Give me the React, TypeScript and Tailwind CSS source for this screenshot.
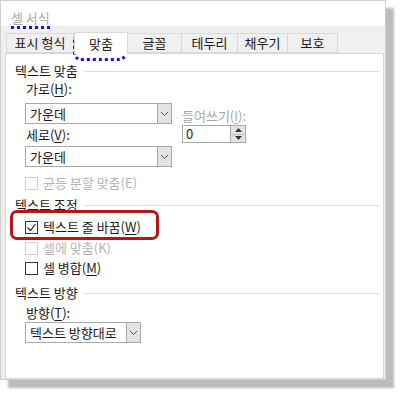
import React from 'react';

const font = { fontFamily: '"Noto Sans CJK KR", "Noto Sans", sans-serif' };

function Key({ k }: { k: string }) {
  return (
    <span>
      (<span className="underline underline-offset-2">{k}</span>)
    </span>
  );
}

function Chevron() {
  return (
    <svg width="9" height="6" viewBox="0 0 9 6">
      <path d="M1 1l3.5 3.5L8 1" fill="none" stroke="#555" strokeWidth="1" />
    </svg>
  );
}

function Select({ value, width }: { value: string; width: string }) {
  return (
    <div className={`flex h-[21px] ${width} border border-[#a9a9a9] bg-white`}>
      <div className="flex flex-1 items-center pl-[4px] text-[13px] text-[#1a1a1a]">{value}</div>
      <div className="flex w-[14px] items-center justify-center border-l border-[#a9a9a9] bg-[#e3e3e3]">
        <Chevron />
      </div>
    </div>
  );
}

function Check({ label, checked, disabled }: { label: React.ReactNode; checked?: boolean; disabled?: boolean }) {
  return (
    <div className={`flex h-[18px] items-center gap-[5px] text-[13px] ${disabled ? 'text-[#b5b5b5]' : 'text-[#1a1a1a]'}`}>
      <div
        className={`flex h-[13px] w-[13px] items-center justify-center border bg-white ${
          disabled ? 'border-[#d0d0d0]' : 'border-[#333]'
        }`}
      >
        {checked && (
          <svg width="11" height="11" viewBox="0 0 11 11">
            <path d="M1.5 5.5l3 3L9.5 2" fill="none" stroke="#222" strokeWidth="1.2" />
          </svg>
        )}
      </div>
      <span>{label}</span>
    </div>
  );
}

function Heading({ text }: { text: string }) {
  return (
    <div className="flex h-[18px] items-center gap-[6px] text-[13px] text-[#1a1a1a]">
      <span>{text}</span>
      <div className="h-px flex-1 bg-[#dcdcdc]" />
    </div>
  );
}

const tabs = [
  { name: '표시 형식', w: 'w-[68px]' },
  { name: '맞춤', w: 'w-[54px]', active: true },
  { name: '글꼴', w: 'w-[54px]' },
  { name: '테두리', w: 'w-[56px]' },
  { name: '채우기', w: 'w-[50px]' },
  { name: '보호', w: 'w-[50px]' },
];

export default function App() {
  return (
    <div className="h-[394px] w-[400px] overflow-hidden bg-white" style={font}>
      <div className="relative flex h-[380px] w-[386px] flex-col border border-[#cfcfcf] bg-[#f0f0f0] shadow-[8px_8px_2px_#bcbcbc]">
        {/* title */}
        <div className="h-[25px] bg-white pl-[10px] pt-[3px]">
          <span className="inline-block border-b-[3px] border-dotted border-[#1414e6] pb-[1px] text-[13px] leading-[15px] text-[#a8a8a8]">
            셀 서식
          </span>
        </div>

        {/* tabs */}
        <div className="flex items-end pl-[5px] pt-[6px]">
          {tabs.map((t) => (
            <div
              key={t.name}
              className={`flex items-center justify-center text-[13px] text-[#1a1a1a] ${t.w} ${
                t.active
                  ? 'relative z-10 -mb-px h-[22px] border border-b-0 border-[#d9d9d9] bg-white'
                  : 'h-[20px] border border-l-0 border-[#d9d9d9] bg-[#f0f0f0] first:border-l'
              }`}
            >
              {t.name}
            </div>
          ))}
        </div>

        {/* panel */}
        <div className="mr-px ml-[4px] flex-1 border border-[#d9d9d9] bg-white pr-[4px] pl-[9px] pt-[8px]">
          <Heading text="텍스트 맞춤" />
          <div className="pl-[10px]">
            <div className="flex h-[18px] items-center pl-px text-[13px] text-[#1a1a1a]">
              가로<Key k="H" />:
            </div>
            <div className="mt-[5px] flex gap-[10px]">
              <div className="w-[147px]">
                <Select value="가운데" width="w-[147px]" />
                <div className="flex h-[22px] items-center pl-px text-[13px] text-[#1a1a1a]">
                  세로<Key k="V" />:
                </div>
                <Select value="가운데" width="w-[147px]" />
              </div>
              <div className="pt-[4px]">
                <div className="flex h-[18px] items-center text-[13px] text-[#a8a8a8]">
                  들여쓰기<Key k="I" />:
                </div>
                <div className="flex h-[18px] w-[64px] border border-[#a9a9a9] bg-white">
                  <div className="flex flex-1 items-center pl-[3px] text-[13px] text-[#1a1a1a]">0</div>
                  <div className="flex w-[15px] flex-col border-l border-[#a9a9a9] bg-[#e3e3e3]">
                    <div className="flex flex-1 items-center justify-center border-b border-[#bdbdbd]">
                      <svg width="7" height="4" viewBox="0 0 7 4">
                        <path d="M0 4L3.5 0L7 4z" fill="#333" />
                      </svg>
                    </div>
                    <div className="flex flex-1 items-center justify-center">
                      <svg width="7" height="4" viewBox="0 0 7 4">
                        <path d="M0 0L3.5 4L7 0z" fill="#333" />
                      </svg>
                    </div>
                  </div>
                </div>
              </div>
            </div>
            <div className="mt-[7px]">
              <Check label={<>균등 분할 맞춤(E)</>} disabled />
            </div>
          </div>

          <div className="mt-[4px]">
            <Heading text="텍스트 조정" />
          </div>
          <div className="pl-[10px]">
            <div className="mt-[4px]">
              <Check label={<>텍스트 줄 바꿈<Key k="W" /></>} checked />
            </div>
            <div className="mt-[3px]">
              <Check label={<>셀에 맞춤(K)</>} disabled />
            </div>
            <div className="mt-[2px]">
              <Check label={<>셀 병합<Key k="M" /></>} />
            </div>
          </div>

          <div className="mt-[7px]">
            <Heading text="텍스트 방향" />
          </div>
          <div className="pl-[10px]">
            <div className="mt-[2px] flex h-[18px] items-center pl-px text-[13px] text-[#1a1a1a]">
              방향<Key k="T" />:
            </div>
            <Select value="텍스트 방향대로" width="w-[116px]" />
          </div>
        </div>

        {/* annotations */}
        <div className="pointer-events-none absolute top-[31px] left-[72px] h-[29px] w-[54px] rounded-[8px] border-[3px] border-dotted border-[#1414e6]" />
        <div className="pointer-events-none absolute top-[209px] left-[9px] h-[30px] w-[149px] rounded-[7px] border-[3px] border-[#b5161b]" />
      </div>
    </div>
  );
}
